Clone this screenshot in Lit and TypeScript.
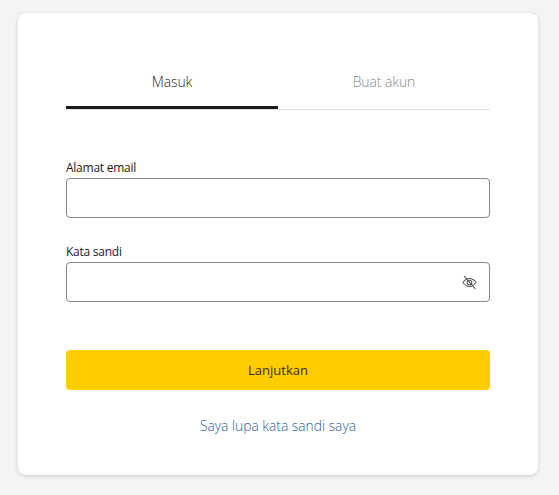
import { LitElement, html, css } from "lit";
import { customElement } from "lit/decorators.js";

@customElement("app-root")
export class AppRoot extends LitElement {
  static styles = css`
    :host {
      display: block;
      width: 559px;
      height: 495px;
      box-sizing: border-box;
      padding: 13px 21px 20px 18px;
      background: #f2f4f6;
      font-family: "Open Sans", "Noto Sans", sans-serif;
      overflow: hidden;
    }
    .card {
      box-sizing: border-box;
      height: 462px;
      background: #fff;
      border-radius: 8px;
      padding: 56px 48px 0;
      box-shadow: 0 1px 4px rgba(0, 0, 0, 0.16);
      display: flex;
      flex-direction: column;
    }
    .tabs {
      display: flex;
      height: 40px;
      border-bottom: 1px solid #e0e0e0;
    }
    .tab {
      flex: 1;
      text-align: center;
      font-size: 14px;
      line-height: 26px;
      color: #8a8a8a;
      font-weight: 300;
      letter-spacing: -0.1px;
    }
    .tab.active {
      color: #1f1f1f;
      border-bottom: 3px solid #1a1a1a;
      height: 37px;
      margin-bottom: -1px;
    }
    .field { display: flex; flex-direction: column; }
    .field.first { margin-top: 50px; }
    .field.second { margin-top: 26px; }
    label {
      font-size: 12px;
      line-height: 16px;
      letter-spacing: -0.25px;
      color: #1a1a1a;
      margin-bottom: 2px;
    }
    .input {
      box-sizing: border-box;
      height: 40px;
      border: 1px solid #868686;
      border-radius: 4px;
      background: #fff;
      display: flex;
      align-items: center;
      justify-content: flex-end;
      padding-right: 12px;
    }
    .input svg { width: 15px; height: 15px; display: block; }
    .btn {
      margin-top: 48px;
      height: 40px;
      background: #ffcc00;
      border-radius: 4px;
      display: flex;
      align-items: center;
      justify-content: center;
      font-size: 13px;
      color: #3a2a10;
    }
    .link {
      margin-top: 26px;
      text-align: center;
      font-size: 13.8px;
      line-height: 20px;
      font-weight: 300;
      color: #2f5f8f;
    }
  `;

  render() {
    return html`
      <div class="card">
        <div class="tabs">
          <div class="tab active">Masuk</div>
          <div class="tab">Buat akun</div>
        </div>
        <div class="field first">
          <label>Alamat email</label>
          <div class="input"></div>
        </div>
        <div class="field second">
          <label>Kata sandi</label>
          <div class="input">
            <svg viewBox="0 0 16 16" fill="none" stroke="#555" stroke-width="1.1" stroke-linecap="round">
              <path d="M1 8C3 5.200 5.300 3.800 8 3.800S13 5.200 15 8C13 10.800 10.700 12.200 8 12.200S3 10.800 1 8Z" />
              <circle cx="8" cy="8" r="2.500" />
              <path d="M2.500 1.500L14 14.500" />
            </svg>
          </div>
        </div>
        <div class="btn">Lanjutkan</div>
        <div class="link">Saya lupa kata sandi saya</div>
      </div>
    `;
  }
}
